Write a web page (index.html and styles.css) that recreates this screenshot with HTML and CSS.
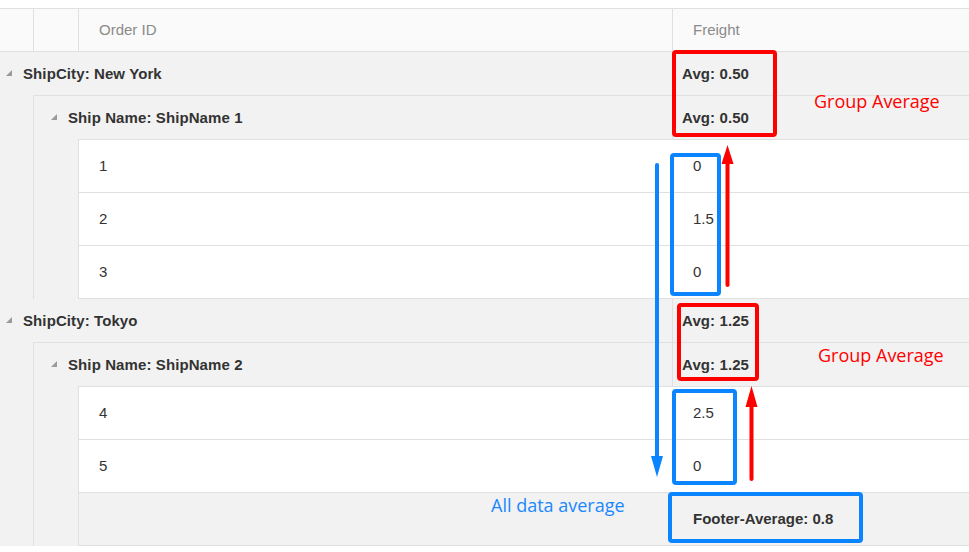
FILE: index.html
```html
<!DOCTYPE html>
<html lang="en">
<head>
    <meta charset="UTF-8">
    <title>Grid Aggregates</title>
    <link rel="stylesheet" href="styles.css">
</head>
<body>
    <div class="page">
        <div class="grid">
            <!-- Column headers -->
            <div class="grid-header">
                <div class="indent indent-1"></div>
                <div class="indent indent-2"></div>
                <div class="hcell col-order">Order ID</div>
                <div class="hcell col-freight">Freight</div>
            </div>

            <!-- Group: New York -->
            <div class="group">
                <div class="caption caption-1">
                    <div class="caption-text"><span class="expand"></span>ShipCity: New York</div>
                    <div class="caption-agg">Avg: 0.50</div>
                </div>
                <div class="subgroup">
                    <div class="caption caption-2">
                        <div class="caption-text"><span class="expand"></span>Ship Name: ShipName 1</div>
                        <div class="caption-agg">Avg: 0.50</div>
                    </div>
                    <div class="rows">
                        <div class="row"><div class="cell col-order">1</div><div class="cell col-freight">0</div></div>
                        <div class="row"><div class="cell col-order">2</div><div class="cell col-freight">1.5</div></div>
                        <div class="row"><div class="cell col-order">3</div><div class="cell col-freight">0</div></div>
                    </div>
                </div>
            </div>

            <!-- Group: Tokyo -->
            <div class="group">
                <div class="caption caption-1">
                    <div class="caption-text"><span class="expand"></span>ShipCity: Tokyo</div>
                    <div class="caption-agg">Avg: 1.25</div>
                </div>
                <div class="subgroup">
                    <div class="caption caption-2">
                        <div class="caption-text"><span class="expand"></span>Ship Name: ShipName 2</div>
                        <div class="caption-agg">Avg: 1.25</div>
                    </div>
                    <div class="rows">
                        <div class="row"><div class="cell col-order">4</div><div class="cell col-freight">2.5</div></div>
                        <div class="row"><div class="cell col-order">5</div><div class="cell col-freight">0</div></div>
                    </div>
                </div>
            </div>

            <!-- Footer aggregate -->
            <div class="footer-row">
                <div class="indent indent-1"></div>
                <div class="indent indent-2"></div>
                <div class="cell col-order"></div>
                <div class="cell col-freight footer-agg">Footer-Average: 0.8</div>
            </div>
        </div>

        <!-- Callouts drawn on top of the grid -->
        <svg class="callouts" width="969" height="552" viewBox="0 0 969 552">
            <g fill="none" stroke-width="4" stroke-linejoin="round">
                <rect x="674" y="52" width="101" height="83" rx="2" stroke="#ff0000"/>
                <rect x="679" y="305" width="78" height="74" rx="2" stroke="#ff0000"/>
                <rect x="672" y="155" width="47" height="139" rx="2" stroke="#0a84ff"/>
                <rect x="674" y="391" width="61" height="92" rx="2" stroke="#0a84ff"/>
                <rect x="670" y="494" width="191" height="47" rx="2" stroke="#0a84ff"/>
            </g>
            <g stroke-width="4" stroke-linecap="round">
                <line x1="727.5" y1="285" x2="727.5" y2="162" stroke="#ff0000"/>
                <line x1="751.5" y1="479" x2="751.5" y2="405" stroke="#ff0000"/>
                <line x1="657" y1="165" x2="657" y2="459" stroke="#0a84ff"/>
            </g>
            <polygon points="727.5,145 733.5,164 721.5,164" fill="#ff0000"/>
            <polygon points="751.5,386 757.5,407 745.5,407" fill="#ff0000"/>
            <polygon points="657,477 663,456 651,456" fill="#0a84ff"/>
        </svg>
        <span class="note note-red note-1">Group Average</span>
        <span class="note note-red note-2">Group Average</span>
        <span class="note note-blue note-3">All data average</span>
    </div>
</body>
</html>
```

FILE: styles.css
```css
/* Page reset */
body, html {
    margin: 0;
    padding: 0;
    background-color: #ffffff;
    font-family: "Liberation Sans", Arial, sans-serif;
    font-size: 15px;
    color: #333333;
}

* {
    box-sizing: border-box;
}

.page {
    position: relative;
    width: 969px;
    height: 552px;
    padding-top: 8px;
    overflow: hidden;
}

.grid {
    background-color: #f2f2f2;
}

/* Header */
.grid-header {
    display: flex;
    height: 44px;
    background-color: #fafafa;
    border-top: 1px solid #e0e0e0;
    border-bottom: 1px solid #e0e0e0;
}

.indent {
    flex: none;
    border-right: 1px solid #e0e0e0;
}

.indent-1 {
    width: 34px;
}

.indent-2 {
    width: 45px;
}

.col-order {
    flex: none;
    width: 593px;
    padding-left: 20px;
}

.col-freight {
    flex: 1;
    padding-left: 21px;
}

.hcell {
    display: flex;
    align-items: center;
    padding-bottom: 1px;
    color: #8a8a8a;
}

.grid-header .col-freight {
    border-left: 1px solid #e0e0e0;
    padding-left: 20px;
}

/* Group captions */
.caption {
    display: flex;
    height: 43px;
    font-weight: bold;
    letter-spacing: 0.1px;
    color: #333333;
}

.caption-1 .caption-text {
    width: 672px;
    padding-left: 6px;
}

.subgroup {
    margin-left: 33px;
    border-left: 1px solid #e0e0e0;
}

.caption-2 {
    height: 44px;
    border-top: 1px solid #e0e0e0;
}

.caption-2 .caption-text {
    width: 638px;
    padding-left: 17px;
}

.caption-text {
    flex: none;
    display: flex;
    align-items: center;
    padding-bottom: 1px;
}

.caption-agg {
    flex: 1;
    display: flex;
    align-items: center;
    padding-left: 9px;
    padding-bottom: 1px;
    border-left: 1px solid #e0e0e0;
}

/* small expand arrow */
.expand {
    width: 0;
    height: 0;
    margin-right: 11px;
    border-left: 6px solid transparent;
    border-bottom: 6px solid #9a9a9a;
}

/* Data rows */
.rows {
    margin-left: 44px;
    border-left: 1px solid #e0e0e0;
    border-top: 1px solid #e0e0e0;
    background-color: #ffffff;
}

.row {
    display: flex;
    height: 53px;
    border-bottom: 1px solid #e0e0e0;
}

.cell {
    display: flex;
    align-items: center;
    padding-bottom: 1px;
}

/* Footer */
.footer-row {
    display: flex;
    height: 53px;
}

.footer-row .col-order,
.footer-row .col-freight {
    border-bottom: 1px solid #e0e0e0;
}

.footer-agg {
    font-weight: bold;
}

/* Callouts */
.callouts {
    position: absolute;
    left: 0;
    top: 0;
}

.note {
    position: absolute;
    font-family: "Open Sans", "Noto Sans", sans-serif;
    font-size: 18px;
    line-height: 20px;
    white-space: nowrap;
}

.note-red {
    color: #ff0000;
}

.note-blue {
    color: #1a88ff;
}

.note-1 {
    left: 814px;
    top: 91px;
}

.note-2 {
    left: 818px;
    top: 345px;
}

.note-3 {
    left: 491px;
    top: 495px;
}
```
